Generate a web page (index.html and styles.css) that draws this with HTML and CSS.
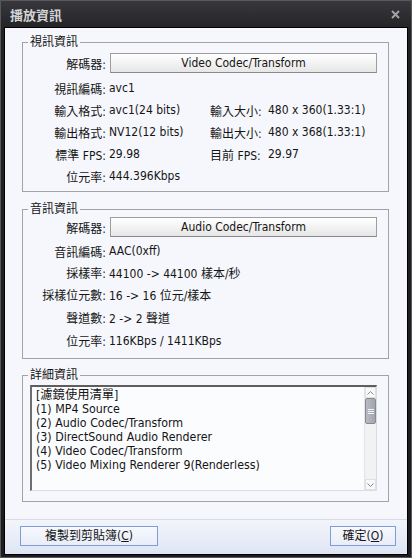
FILE: index.html
```html
<!DOCTYPE html>
<html lang="zh-Hant">
<head>
    <meta charset="UTF-8">
    <meta name="viewport" content="width=device-width, initial-scale=1.0">
    <title>播放資訊</title>
    <link rel="stylesheet" href="styles.css">
</head>
<body>

    <div class="window">
        <div class="titlebar">
            <span class="title">播放資訊</span>
            <svg class="close" width="9" height="9" viewBox="0 0 9 9">
                <path d="M1 1 L8 8 M8 1 L1 8" stroke="#a3a3a6" stroke-width="2"/>
            </svg>
        </div>

        <div class="client">
            <fieldset class="group group-video">
                <legend>視訊資訊</legend>
                <div class="decoder">
                    <span class="label">解碼器:</span>
                    <div class="codec-btn">Video Codec/Transform</div>
                </div>
                <div class="info info-video">
                    <span class="label">視訊編碼:</span><span class="wide">avc1</span>
                    <span class="label">輸入格式:</span><span>avc1(24 bits)</span>
                    <span>輸入大小:</span><span>480 x 360(1.33:1)</span>
                    <span class="label">輸出格式:</span><span>NV12(12 bits)</span>
                    <span>輸出大小:</span><span>480 x 368(1.33:1)</span>
                    <span class="label">標準 FPS:</span><span>29.98</span>
                    <span>目前 FPS:</span><span>29.97</span>
                    <span class="label">位元率:</span><span class="wide">444.396Kbps</span>
                </div>
            </fieldset>

            <fieldset class="group group-audio">
                <legend>音訊資訊</legend>
                <div class="decoder">
                    <span class="label">解碼器:</span>
                    <div class="codec-btn">Audio Codec/Transform</div>
                </div>
                <div class="info info-audio">
                    <span class="label">音訊編碼:</span><span class="wide">AAC(0xff)</span>
                    <span class="label">採樣率:</span><span class="wide">44100 -&gt; 44100 樣本/秒</span>
                    <span class="label">採樣位元數:</span><span class="wide">16 -&gt; 16 位元/樣本</span>
                    <span class="label">聲道數:</span><span class="wide">2 -&gt; 2 聲道</span>
                    <span class="label">位元率:</span><span class="wide">116KBps / 1411KBps</span>
                </div>
            </fieldset>

            <fieldset class="group group-detail">
                <legend>詳細資訊</legend>
                <div class="listbox">
                    <div class="list-text">
                        <div>[濾鏡使用清單]</div>
                        <div>(1) MP4 Source</div>
                        <div>(2) Audio Codec/Transform</div>
                        <div>(3) DirectSound Audio Renderer</div>
                        <div>(4) Video Codec/Transform</div>
                        <div>(5) Video Mixing Renderer 9(Renderless)</div>
                    </div>
                    <div class="scrollbar">
                        <div class="sb-btn">
                            <svg width="7" height="4" viewBox="0 0 7 4"><path d="M0.5 3.5 L3.5 0.5 L6.5 3.5" fill="none" stroke="#8a8a8a"/></svg>
                        </div>
                        <div class="sb-thumb">
                            <span></span><span></span><span></span>
                        </div>
                        <div class="sb-track"></div>
                        <div class="sb-btn">
                            <svg width="7" height="4" viewBox="0 0 7 4"><path d="M0.5 0.5 L3.5 3.5 L6.5 0.5" fill="none" stroke="#8a8a8a"/></svg>
                        </div>
                    </div>
                </div>
            </fieldset>

            <div class="footer">
                <div class="btn btn-copy">複製到剪貼簿(<u>C</u>)</div>
                <div class="btn btn-ok">確定(<u>O</u>)</div>
            </div>
        </div>
    </div>

</body>
</html>
```

FILE: styles.css
```css
* {
    box-sizing: border-box;
}

body {
    margin: 0;
    background-color: #1d1d20;
    font-family: "DejaVu Sans Condensed", "DejaVu Sans", "Noto Sans CJK TC", sans-serif;
    font-stretch: condensed;
    font-size: 12px;
    color: #151515;
}

.window {
    width: 412px;
    height: 558px;
    display: flex;
    flex-direction: column;
    border: 1px solid #56585d;
    background: linear-gradient(#38383c, #222225 30px, #1c1c1f);
}

.titlebar {
    height: 26px;
    display: flex;
    align-items: center;
    justify-content: space-between;
    padding: 0 11px 0 9px;
}

.title {
    color: #d4d4d6;
    font-weight: bold;
    font-size: 13px;
    font-family: "Noto Sans CJK TC", sans-serif;
}

.client {
    flex: 1;
    margin: 0 3px 2px;
    border: 1px solid #000;
    background-color: #f5f7fc;
    display: flex;
    flex-direction: column;
}

/* group boxes */
.group {
    margin: 0 18px 0 17px;
    padding: 0 11px 4px 0;
    min-width: 0;
    border: 1px solid #a3a3a3;
}

.group legend {
    margin-left: 5px;
    padding: 0 2px;
    line-height: 14px;
}

.group-video {
    margin-top: 7px;
}

.group-audio {
    margin-top: 10px;
    padding-bottom: 6px;
}

.group-detail {
    margin-top: 9px;
    padding-bottom: 10px;
}

.label {
    text-align: right;
    white-space: nowrap;
    padding-right: 3px;
}

.decoder {
    display: flex;
    align-items: center;
    margin-top: 4px;
}

.group-audio .decoder {
    margin-top: 1px;
}

.decoder .label {
    width: 86px;
}

.codec-btn {
    flex: 1;
    margin-left: 1px;
    height: 20px;
    line-height: 18px;
    text-align: center;
    border: 1px solid #9d9d9d;
    border-bottom-color: #8a8a8a;
    background: linear-gradient(#ffffff, #f3f3f3 50%, #e6e6e6);
}

.info {
    display: grid;
    grid-template-columns: 86px 101px 58px 1fr;
    align-items: center;
    white-space: nowrap;
}

.info .wide {
    grid-column: span 3;
}

.info-video {
    margin-top: 4px;
    grid-auto-rows: 22px;
}

.info-audio {
    margin-top: 3px;
    grid-template-rows: 22px 21px 23px 23px 23px;
}

/* list box */
.listbox {
    margin: 3px 0 0 7px;
    height: 106px;
    display: flex;
    border-style: solid;
    border-width: 2px 1px 1px 2px;
    border-color: #5e5e5e #dcdcdc #dcdcdc #6e6e6e;
    background-color: #fbfcfe;
}

.list-text {
    flex: 1;
    padding: 1px 0 0 4px;
    line-height: 14px;
    font-size: 12.3px;
    overflow: hidden;
    white-space: nowrap;
}

.scrollbar {
    width: 12px;
    display: flex;
    flex-direction: column;
    background-color: #f2f2f4;
    border-left: 1px solid #e4e4e8;
}

.sb-btn {
    height: 11px;
    display: flex;
    align-items: center;
    justify-content: center;
    border: 1px solid #e0e0e4;
    background-color: #f8f8fa;
}

.sb-thumb {
    height: 26px;
    display: flex;
    flex-direction: column;
    align-items: center;
    justify-content: center;
    gap: 1px;
    border: 1px solid #878a92;
    border-radius: 2px;
    background: linear-gradient(90deg, #b8bbc3, #a2a5ad);
}

.sb-thumb span {
    width: 6px;
    height: 1px;
    background-color: #f4f4f6;
}

.sb-track {
    flex: 1;
}

/* bottom buttons */
.footer {
    margin-top: auto;
    height: 35px;
    display: flex;
    justify-content: space-between;
    padding: 6px 11px 0 15px;
    border-top: 1px solid #d8dce6;
    background: linear-gradient(#f3f5fb, #dfe5f4);
}

.btn {
    height: 20px;
    line-height: 18px;
    text-align: center;
    border: 1px solid #7f9cd9;
    background: linear-gradient(#f6f8fd, #e9edf8);
}

.btn-copy {
    width: 138px;
}

.btn-ok {
    width: 66px;
}
```
